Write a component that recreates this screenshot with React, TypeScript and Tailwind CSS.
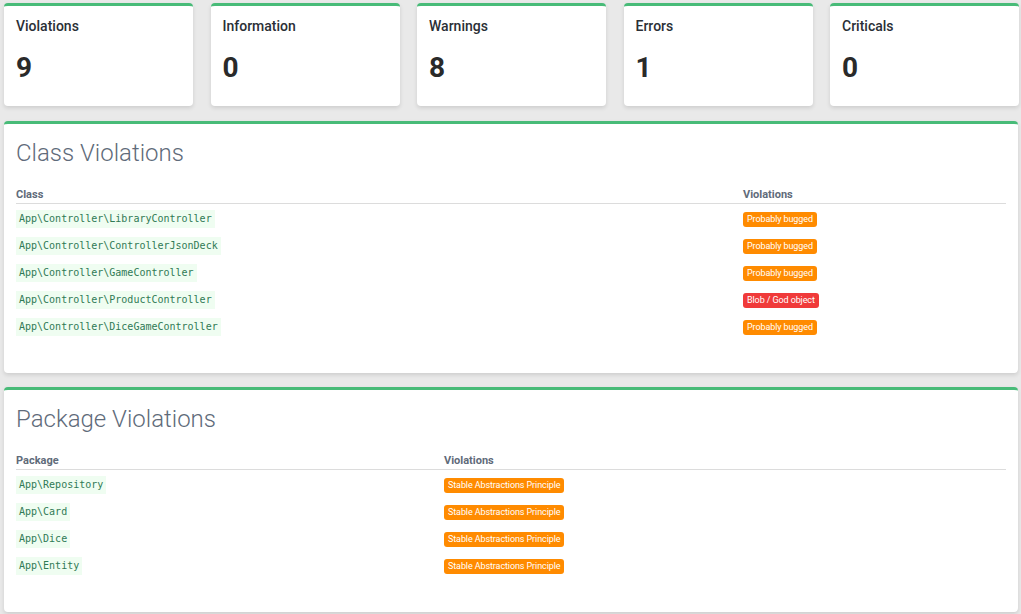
const stats = [
  { label: "Violations", value: 9 },
  { label: "Information", value: 0 },
  { label: "Warnings", value: 8 },
  { label: "Errors", value: 1 },
  { label: "Criticals", value: 0 },
];

const classRows = [
  { name: "App\\Controller\\LibraryController", badge: "Probably bugged", red: false },
  { name: "App\\Controller\\ControllerJsonDeck", badge: "Probably bugged", red: false },
  { name: "App\\Controller\\GameController", badge: "Probably bugged", red: false },
  { name: "App\\Controller\\ProductController", badge: "Blob / God object", red: true },
  { name: "App\\Controller\\DiceGameController", badge: "Probably bugged", red: false },
];

const packageRows = ["App\\Repository", "App\\Card", "App\\Dice", "App\\Entity"];

function Code({ children }: { children: string }) {
  return (
    <code className="inline-block bg-[#effdf1] text-[#2f7a55] px-[3px] py-[2px] text-[10px] leading-[14px] font-['DejaVu_Sans_Mono',monospace]">
      {children}
    </code>
  );
}

function Badge({ children, red }: { children: string; red?: boolean }) {
  return (
    <span
      className={`inline-block rounded-[3px] px-[4px] py-[2px] text-[9px] leading-[11px] tracking-[-0.1px] text-white ${
        red ? "bg-[#f03a3a]" : "bg-[#ff8b00]"
      }`}
    >
      {children}
    </span>
  );
}

export default function App() {
  return (
    <div className="min-h-[614px] bg-[#e9e9e9] pl-[4px] pr-[2px] pt-[3px] pb-[3px] font-['Roboto',sans-serif] text-[#333]">
      <div className="grid grid-cols-5 gap-[17.5px]">
        {stats.map((s) => (
          <div
            key={s.label}
            className="h-[103px] bg-white rounded-[4px] border-t-[3px] border-[#48bb78] shadow-[0_2px_4px_rgba(0,0,0,0.12)] px-[12px] pt-[11px]"
          >
            <div className="text-[14px] font-medium leading-[18px] text-[#2a2f36]">{s.label}</div>
            <div className="mt-[18px] text-[28px] font-bold leading-[30px] text-[#2a2a2a]">{s.value}</div>
          </div>
        ))}
      </div>

      <div className="mt-[15px] mr-[1px] h-[252px] bg-white rounded-[4px] border-t-[3px] border-[#48bb78] shadow-[0_2px_4px_rgba(0,0,0,0.12)] px-[12px] pt-[14px]">
        <h2 className="text-[24px] font-light leading-[30px] text-[#5f6b7a]">Class Violations</h2>
        <table className="mt-[20px] w-full text-left border-collapse">
          <thead>
            <tr className="border-b border-[#dcdcdc]">
              <th className="w-[727px] pb-[1px] text-[11px] font-bold leading-[14px] text-[#5f6b7a]">Class</th>
              <th className="pb-[1px] text-[11px] font-bold leading-[14px] text-[#5f6b7a]">Violations</th>
            </tr>
          </thead>
          <tbody>
            {classRows.map((r) => (
              <tr key={r.name} className="h-[27.2px]">
                <td className="align-middle pb-[1px]">
                  <Code>{r.name}</Code>
                </td>
                <td className="align-middle pb-[1px]">
                  <Badge red={r.red}>{r.badge}</Badge>
                </td>
              </tr>
            ))}
          </tbody>
        </table>
      </div>

      <div className="mt-[14px] mr-[1px] h-[225px] bg-white rounded-[4px] border-t-[3px] border-[#48bb78] shadow-[0_2px_4px_rgba(0,0,0,0.12)] px-[12px] pt-[14px]">
        <h2 className="text-[24px] font-light leading-[30px] text-[#5f6b7a]">Package Violations</h2>
        <table className="mt-[20px] w-full text-left border-collapse">
          <thead>
            <tr className="border-b border-[#dcdcdc]">
              <th className="w-[428px] pb-[1px] text-[11px] font-bold leading-[14px] text-[#5f6b7a]">Package</th>
              <th className="pb-[1px] text-[11px] font-bold leading-[14px] text-[#5f6b7a]">Violations</th>
            </tr>
          </thead>
          <tbody>
            {packageRows.map((p) => (
              <tr key={p} className="h-[27.2px]">
                <td className="align-middle pb-[1px]">
                  <Code>{p}</Code>
                </td>
                <td className="align-middle pb-[1px]">
                  <Badge>Stable Abstractions Principle</Badge>
                </td>
              </tr>
            ))}
          </tbody>
        </table>
      </div>
    </div>
  );
}
